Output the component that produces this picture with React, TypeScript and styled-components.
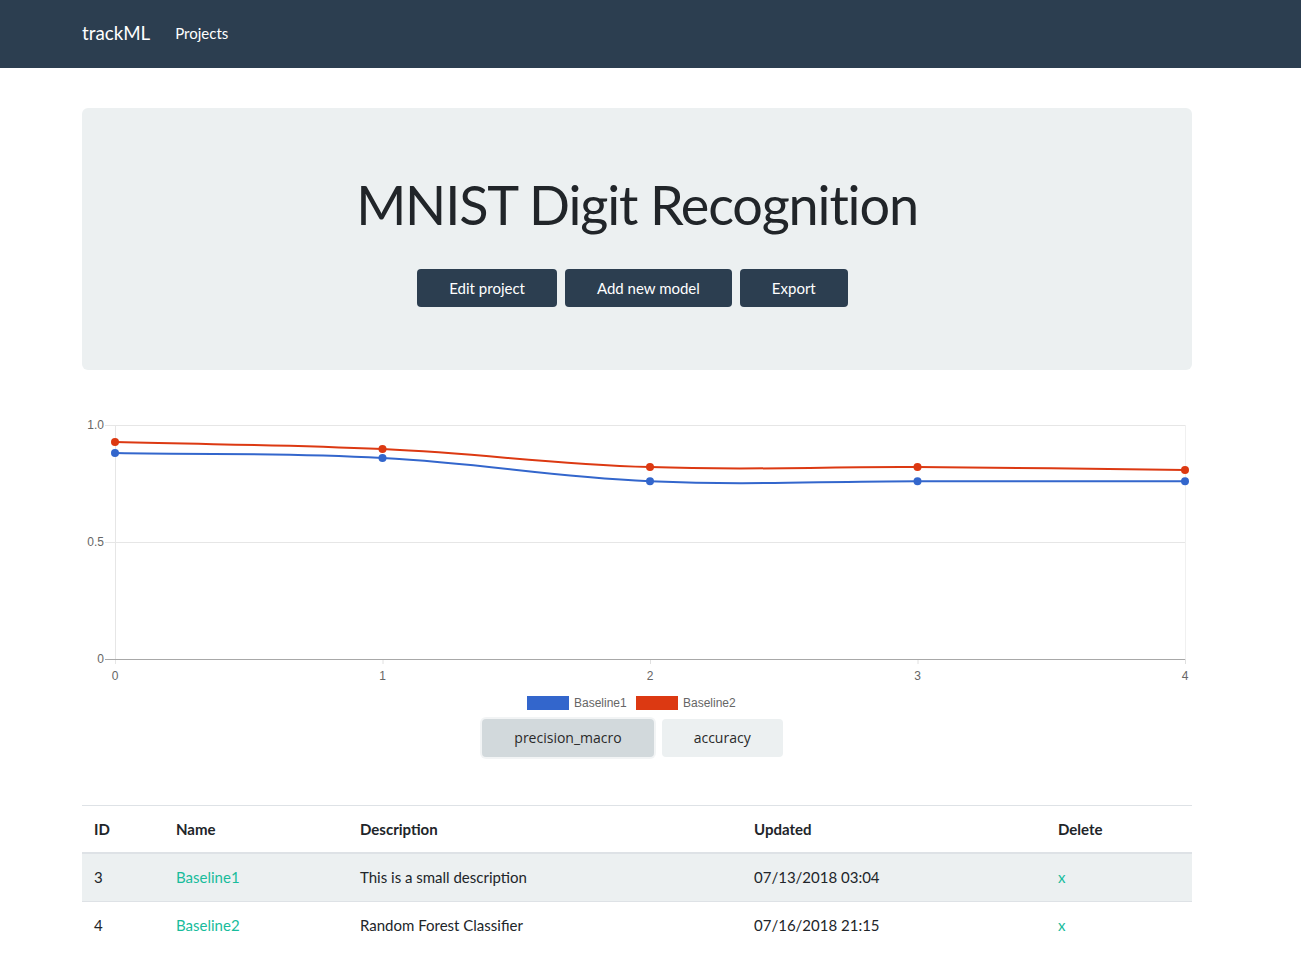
import React from "react";
import styled, { createGlobalStyle } from "styled-components";

const GlobalStyle = createGlobalStyle`
  html, body { margin: 0; padding: 0; background: #fff; }
  body {
    font-family: Lato, "Open Sans", "Liberation Sans", sans-serif;
    font-size: 15px;
    line-height: 1.5;
    color: #212529;
  }
  * { box-sizing: border-box; }
`;

const NavBar = styled.nav`
  height: 68px;
  background: #2c3e50;
  display: flex;
  align-items: center;
`;

const NavInner = styled.div`
  width: 1110px;
  margin-left: 82px;
  display: flex;
  align-items: center;
  gap: 25px;
  margin-top: -2px;
`;

const Brand = styled.a`
  color: #fff;
  font-size: 18.75px;
  text-decoration: none;
  line-height: 1;
`;

const NavLink = styled.a`
  color: #fff;
  font-size: 15px;
  text-decoration: none;
  line-height: 1;
`;

const Container = styled.div`
  width: 1110px;
  margin-left: 82px;
`;

const Jumbotron = styled.section`
  margin-top: 40px;
  background: #ecf0f1;
  border-radius: 6px;
  padding: 65px 32px 63px;
  display: flex;
  flex-direction: column;
  align-items: center;
`;

const Title = styled.h1`
  margin: 0;
  font-size: 54px;
  font-weight: 400;
  line-height: 1.2;
  letter-spacing: -1.15px;
  color: #212529;
`;

const ButtonRow = styled.div`
  margin-top: 31px;
  margin-right: 9px;
  display: flex;
  gap: 8px;
`;

const DarkButton = styled.button`
  height: 38px;
  padding: 0 32px;
  border: none;
  border-radius: 4px;
  background: #2c3e50;
  color: #fff;
  font-family: inherit;
  font-size: 15px;
  cursor: pointer;
`;

const ChartBox = styled.div`
  margin-top: 40px;
  display: flex;
  flex-direction: column;
  align-items: center;
`;

const MetricRow = styled.div`
  margin-top: 4px;
  display: flex;
  gap: 8px;
  margin-right: 9px;
`;

const MetricButton = styled.button<{ $active?: boolean }>`
  height: 38px;
  padding: 0 32px;
  border: none;
  border-radius: 4px;
  background: ${(p) => (p.$active ? "#d2d9dc" : "#ecf0f1")};
  box-shadow: ${(p) => (p.$active ? "0 0 0 2px rgba(236,240,241,0.7)" : "none")};
  color: #2a2a2a;
  font-family: "Open Sans", Lato, sans-serif;
  font-size: 14px;
  cursor: pointer;
`;

const Table = styled.table`
  margin-top: 48px;
  width: 1110px;
  border-collapse: collapse;
  border-top: 1px solid #dee2e6;
`;

const Th = styled.th<{ $w?: number }>`
  text-align: left;
  font-weight: 700;
  padding: 12px;
  width: ${(p) => (p.$w ? `${p.$w}px` : "auto")};
  border-bottom: 2px solid #dee2e6;
`;

const Tr = styled.tr<{ $striped?: boolean }>`
  background: ${(p) => (p.$striped ? "#ecf0f1" : "transparent")};
`;

const Td = styled.td`
  padding: 12px;
  border-top: 1px solid #dee2e6;
`;

const GreenLink = styled.a`
  color: #18bc9c;
  text-decoration: none;
`;

type Pt = { x: number; y: number };

function splinePath(pts: Pt[], t = 0.4): string {
  const cps = pts.map((cur, i) => {
    const prev = pts[i - 1] || cur;
    const next = pts[i + 1] || cur;
    const d01 = Math.hypot(cur.x - prev.x, cur.y - prev.y);
    const d12 = Math.hypot(next.x - cur.x, next.y - cur.y);
    let s01 = d01 / (d01 + d12);
    let s12 = d12 / (d01 + d12);
    if (isNaN(s01)) s01 = 0;
    if (isNaN(s12)) s12 = 0;
    const fa = t * s01;
    const fb = t * s12;
    return {
      p: { x: cur.x - fa * (next.x - prev.x), y: cur.y - fa * (next.y - prev.y) },
      n: { x: cur.x + fb * (next.x - prev.x), y: cur.y + fb * (next.y - prev.y) },
    };
  });
  let d = `M${pts[0].x},${pts[0].y}`;
  for (let i = 1; i < pts.length; i++) {
    const c1 = cps[i - 1].n;
    const c2 = cps[i].p;
    d += ` C${c1.x},${c1.y} ${c2.x},${c2.y} ${pts[i].x},${pts[i].y}`;
  }
  return d;
}

const X0 = 33;
const XW = 1070;
const Y0 = 249;
const YH = 234;
const xs = [0, 1, 2, 3, 4].map((i) => X0 + (XW / 4) * i);
const toPts = (vals: number[]) => vals.map((v, i) => ({ x: xs[i], y: Y0 - v * YH }));

const series = [
  { name: "Baseline1", color: "#3366cc", vals: [0.88, 0.859, 0.76, 0.76, 0.76] },
  { name: "Baseline2", color: "#dc3912", vals: [0.927, 0.897, 0.82, 0.82, 0.808] },
];

const Chart: React.FC = () => (
  <svg width={1110} height={305} viewBox="0 0 1110 305" style={{ display: "block" }}>
    <g fontFamily='"Liberation Sans", Arial, sans-serif' fontSize={12} fill="#666">
      {[1, 0.5].map((v) => (
        <line key={v} x1={23} x2={1103} y1={Y0 - v * YH + 0.5} y2={Y0 - v * YH + 0.5} stroke="#e6e6e6" />
      ))}
      <line x1={X0 + 0.5} x2={X0 + 0.5} y1={15} y2={254} stroke="#e6e6e6" />
      <line x1={1103.5} x2={1103.5} y1={15} y2={254} stroke="#f0f0f0" />
      {xs.slice(1).map((x) => (
        <line key={x} x1={x + 0.5} x2={x + 0.5} y1={249} y2={254} stroke="#e0e0e0" />
      ))}
      <line x1={23} x2={1103} y1={Y0 + 0.5} y2={Y0 + 0.5} stroke="#a8a8a8" />
      {[
        ["1.0", 1],
        ["0.5", 0.5],
        ["0", 0],
      ].map(([l, v]) => (
        <text key={String(l)} x={22} y={Y0 - (v as number) * YH + 4} textAnchor="end">
          {l}
        </text>
      ))}
      {xs.map((x, i) => (
        <text key={i} x={x} y={270} textAnchor="middle">
          {i}
        </text>
      ))}
    </g>
    {series.map((s) => {
      const pts = toPts(s.vals);
      return (
        <g key={s.name}>
          <path d={splinePath(pts)} fill="none" stroke={s.color} strokeWidth={2} />
          {pts.map((p, i) => (
            <circle key={i} cx={p.x} cy={p.y} r={4} fill={s.color} />
          ))}
        </g>
      );
    })}
    <g fontFamily='"Liberation Sans", Arial, sans-serif' fontSize={12} fill="#666">
      <rect x={445} y={286} width={42} height={14} fill="#3366cc" />
      <text x={492} y={297}>Baseline1</text>
      <rect x={554} y={286} width={42} height={14} fill="#dc3912" />
      <text x={601} y={297}>Baseline2</text>
    </g>
  </svg>
);

const rows = [
  { id: 3, name: "Baseline1", desc: "This is a small description", updated: "07/13/2018 03:04" },
  { id: 4, name: "Baseline2", desc: "Random Forest Classifier", updated: "07/16/2018 21:15" },
];

export default function App() {
  return (
    <>
      <GlobalStyle />
      <NavBar>
        <NavInner>
          <Brand href="#">trackML</Brand>
          <NavLink href="#">Projects</NavLink>
        </NavInner>
      </NavBar>
      <Container>
        <Jumbotron>
          <Title>MNIST Digit Recognition</Title>
          <ButtonRow>
            <DarkButton>Edit project</DarkButton>
            <DarkButton>Add new model</DarkButton>
            <DarkButton>Export</DarkButton>
          </ButtonRow>
        </Jumbotron>
        <ChartBox>
          <Chart />
          <MetricRow>
            <MetricButton $active>precision_macro</MetricButton>
            <MetricButton>accuracy</MetricButton>
          </MetricRow>
        </ChartBox>
        <Table>
          <thead>
            <tr>
              <Th $w={82}>ID</Th>
              <Th $w={184}>Name</Th>
              <Th $w={394}>Description</Th>
              <Th $w={304}>Updated</Th>
              <Th>Delete</Th>
            </tr>
          </thead>
          <tbody>
            {rows.map((r, i) => (
              <Tr key={r.id} $striped={i % 2 === 0}>
                <Td>{r.id}</Td>
                <Td>
                  <GreenLink href="#">{r.name}</GreenLink>
                </Td>
                <Td>{r.desc}</Td>
                <Td>{r.updated}</Td>
                <Td>
                  <GreenLink href="#">x</GreenLink>
                </Td>
              </Tr>
            ))}
          </tbody>
        </Table>
      </Container>
    </>
  );
}
